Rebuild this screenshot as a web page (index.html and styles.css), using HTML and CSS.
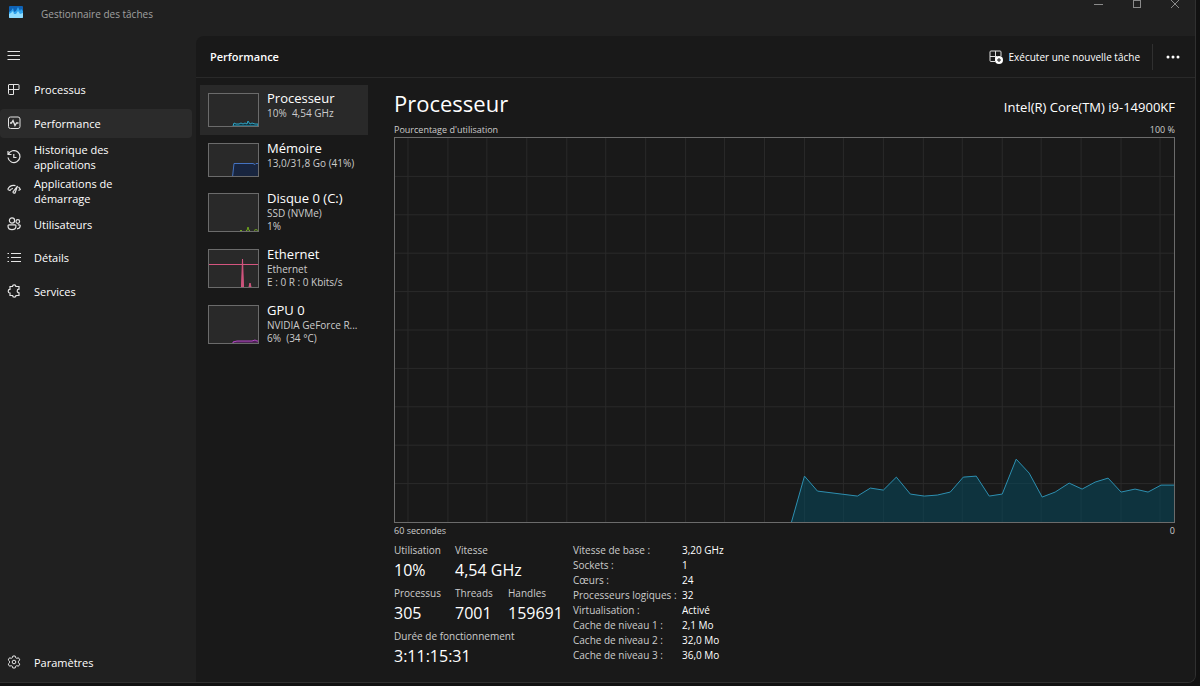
FILE: index.html
```html
<!DOCTYPE html>
<html lang="fr">
<head>
    <meta charset="UTF-8">
    <meta name="viewport" content="width=device-width, initial-scale=1.0">
    <title>Gestionnaire des tâches</title>
    <link rel="stylesheet" href="styles.css">
</head>
<body>
    <div class="window">
        <header class="titlebar">
            <svg class="app-logo" width="14" height="12" viewBox="0 0 14 12">
                <rect width="14" height="12" rx="1" fill="#0f62b5"/>
                <path d="M0 6 L2 5 L4 2 L5 6 L7 5 L9 1 L11 5 L12 3 L14 5 V11 Q14 12 13 12 H1 Q0 12 0 11 Z" fill="#2fa4ee"/>
                <path d="M0 8 L2 7 L4 5 L5 8 L7 8 L9 5 L11 8 L14 7 V11 Q14 12 13 12 H1 Q0 12 0 11 Z" fill="#8fdcff"/>
            </svg>
            <span class="app-name">Gestionnaire des tâches</span>
            <div class="window-buttons">
                <button type="button" aria-label="Réduire"><svg width="10" height="10" viewBox="0 0 10 10"><path d="M0 5.500H9"/></svg></button>
                <button type="button" aria-label="Agrandir"><svg width="10" height="10" viewBox="0 0 10 10"><rect x="1.500" y="1.500" width="7" height="7"/></svg></button>
                <button type="button" aria-label="Fermer"><svg width="10" height="10" viewBox="0 0 10 10"><path d="M1 1L9 9M9 1L1 9"/></svg></button>
            </div>
        </header>

        <div class="layout">
            <nav class="sidebar">
                <button type="button" class="menu-button" aria-label="Menu">
                    <svg class="icon" viewBox="0 0 14 14"><path d="M.5 2.500H13M.5 6.500H13M.5 10.500H13"/></svg>
                </button>
                <div class="nav-list">
                    <a href="#" class="nav-item">
                        <svg class="icon" viewBox="0 0 14 14"><path d="M2 1.500H11.500Q12 1.500 12 2V6.500H1.500V2Q1.500 1.500 2 1.500ZM6.500 1.500V11.500H2.500Q1.500 11.500 1.500 10.500V6"/></svg>
                        <span>Processus</span>
                    </a>
                    <a href="#" class="nav-item active">
                        <svg class="icon" viewBox="0 0 14 14"><rect x="1.500" y="1" width="11.500" height="11.500" rx="2"/><path d="M3 7H4.500L6 4.500L8 9.500L9.500 7H11.500" stroke-width="1.300"/></svg>
                        <span>Performance</span>
                    </a>
                    <a href="#" class="nav-item">
                        <svg class="icon" viewBox="0 0 14 14"><path d="M1 1V4.500H4.500M1.300 4.500A6 6 0 1 1 1 7.500M6.800 4V7.500H9.500" stroke-width="1.200"/></svg>
                        <span>Historique des applications</span>
                    </a>
                    <a href="#" class="nav-item">
                        <svg class="icon" viewBox="0 0 14 14"><path d="M.7 6.500A7 7 0 0 1 8.500 2.600M11.500 4A7 7 0 0 1 13.300 6.500L11.500 7.500M.7 6.500L3 7.500A4 4 0 0 1 6 5.500M10.500 3L6 9A1.300 1.300 0 0 0 8 10Z" stroke-width="1.200"/></svg>
                        <span>Applications de démarrage</span>
                    </a>
                    <a href="#" class="nav-item">
                        <svg class="icon" viewBox="0 0 14 14"><path d="M2 7.800H8Q9 7.800 9 8.800Q9 12.700 5 12.700Q1 12.700 1 8.800Q1 7.800 2 7.800ZM10.800 7.800H12.300Q13.300 7.800 13.300 8.800Q13 11.800 10 11.800" stroke-width="1.200"/><circle cx="5" cy="3.500" r="2.600" stroke-width="1.200"/><circle cx="10.800" cy="4.500" r="1.800" stroke-width="1.200"/></svg>
                        <span>Utilisateurs</span>
                    </a>
                    <a href="#" class="nav-item">
                        <svg class="icon" viewBox="0 0 14 14"><path d="M.5 2.500H2M.5 6.500H2M.5 10.500H2M4 2.500H14M4 6.500H14M4 10.500H14"/></svg>
                        <span>Détails</span>
                    </a>
                    <a href="#" class="nav-item">
                        <svg class="icon" viewBox="0 0 14 14"><path d="M3 2.500H5.500A1.700 1.700 0 0 1 8.900 2.500H12V5.200A1.800 1.800 0 0 0 12 8.800V11.500H9A1.700 1.700 0 0 1 5.600 11.500H3V9A1.800 1.800 0 0 1 3 5.400Z" stroke-width="1.200"/></svg>
                        <span>Services</span>
                    </a>
                </div>
                <a href="#" class="nav-item settings">
                    <svg class="icon" viewBox="0 0 14 14"><path d="M5.800 1H8.200L8.600 2.700L9.800 3.300L11.500 2.800L12.800 4.900L11.500 6.200V7.800L12.800 9.100L11.500 11.200L9.800 10.700L8.600 11.300L8.200 13H5.800L5.400 11.300L4.200 10.700L2.500 11.200L1.200 9.100L2.500 7.800V6.200L1.200 4.900L2.500 2.800L4.200 3.300L5.400 2.700Z"/><circle cx="7" cy="7" r="1.800"/></svg>
                    <span>Paramètres</span>
                </a>
            </nav>

            <main class="content">
                <div class="toolbar">
                    <h1>Performance</h1>
                    <button type="button" class="run-task">
                        <svg width="14" height="14" viewBox="0 0 14 14">
                            <path d="M6 11.500H2Q1 11.500 1 10.500V2Q1 1 2 1H11Q12 1 12 2V6M1 6.500H8M6.500 1V11" fill="none" stroke="#ddd"/>
                            <circle cx="10" cy="10" r="4" fill="#fff"/>
                            <path d="M8 10H12M10 8V12" stroke="#191919"/>
                        </svg>
                        Exécuter une nouvelle tâche
                    </button>
                    <button type="button" class="more" aria-label="Plus d'options">
                        <svg width="14" height="4" viewBox="0 0 14 4"><circle cx="2" cy="2" r="1.500"/><circle cx="7" cy="2" r="1.500"/><circle cx="12" cy="2" r="1.500"/></svg>
                    </button>
                </div>

                <div class="panels">
                    <div class="resources">
                        <a href="#" class="resource selected">
                            <svg class="thumb" viewBox="0 0 49 32">
                                <path d="M24 32L25 29L27 30L30 30L32 29L34 30L36 29L38 30L39 27L41 30L43 29L46 30L49 30V32Z" fill="#10323d" stroke="#2fa3c4"/>
                            </svg>
                            <span class="resource-text"><strong>Processeur</strong><small>10%&nbsp; 4,54 GHz</small></span>
                        </a>
                        <a href="#" class="resource">
                            <svg class="thumb" viewBox="0 0 49 32">
                                <path d="M23.500 33L25 19.500H44L46 20.500L47 19.500H50V33Z" fill="#18253f" stroke="#4472c0"/>
                            </svg>
                            <span class="resource-text"><strong>Mémoire</strong><small>13,0/31,8 Go (41%)</small></span>
                        </a>
                        <a href="#" class="resource">
                            <svg class="thumb tall" viewBox="0 0 49 37">
                                <path d="M31 36.500H33M37 36.500H38L39 33L40 36.500H41M45 36.500L47 35.500L49 36.500" fill="none" stroke="#6fa51e"/>
                            </svg>
                            <span class="resource-text"><strong>Disque 0 (C:)</strong><small>SSD (NVMe)</small><small>1%</small></span>
                        </a>
                        <a href="#" class="resource">
                            <svg class="thumb tall" viewBox="0 0 49 37">
                                <path d="M0 14.500H49" fill="none" stroke="#d4557f"/>
                                <path d="M32.500 37L33.500 9L34.500 37ZM40 37L41 33L42 37Z" fill="#c8527a" stroke="#d4557f"/>
                            </svg>
                            <span class="resource-text"><strong>Ethernet</strong><small>Ethernet</small><small>E : 0 R : 0 Kbits/s</small></span>
                        </a>
                        <a href="#" class="resource">
                            <svg class="thumb tall" viewBox="0 0 49 37">
                                <path d="M24 36L28 35H43L46 34L48 35H50V38H24Z" fill="#4b2452" stroke="#b346c4"/>
                            </svg>
                            <span class="resource-text"><strong>GPU 0</strong><small>NVIDIA GeForce R...</small><small>6%&nbsp; (34 °C)</small></span>
                        </a>
                    </div>

                    <section class="details">
                        <div class="details-header">
                            <h2>Processeur</h2>
                            <span class="model">Intel(R) Core(TM) i9-14900KF</span>
                        </div>
                        <div class="axis"><span>Pourcentage d'utilisation</span><span>100 %</span></div>
                        <svg class="chart" viewBox="0 0 780 385" preserveAspectRatio="none">
                            <path class="grid" d="M0 38.500H780M0 77H780M0 115.500H780M0 154H780M0 192.500H780M0 231H780M0 269.500H780M0 308H780M0 346.500H780"/>
                            <path class="grid" d="M13 0V385M53 0V385M92 0V385M132 0V385M172 0V385M211 0V385M251 0V385M291 0V385M330 0V385M370 0V385M410 0V385M449 0V385M489 0V385M529 0V385M568 0V385M608 0V385M647 0V385M687 0V385M727 0V385M766 0V385"/>
                            <path class="usage" d="M397 385L410 339L423 354L463 359L476 351L489 353L502 340L516 357L530 359L543 358L556 355L569 340L582 339L595 359L608 357L622 322L635 336L648 360L661 355L675 346L688 352L701 345L714 341L727 355L741 352L754 355L767 348H781V386H397Z"/>
                        </svg>
                        <div class="axis"><span>60 secondes</span><span>0</span></div>

                        <div class="stats">
                            <dl class="live">
                                <div><dt>Utilisation</dt><dd>10%</dd></div>
                                <div class="speed"><dt>Vitesse</dt><dd>4,54 GHz</dd></div>
                                <div><dt>Processus</dt><dd>305</dd></div>
                                <div><dt>Threads</dt><dd>7001</dd></div>
                                <div><dt>Handles</dt><dd>159691</dd></div>
                                <div class="uptime"><dt>Durée de fonctionnement</dt><dd>3:11:15:31</dd></div>
                            </dl>
                            <table class="specs">
                                <tr><th>Vitesse de base :</th><td>3,20 GHz</td></tr>
                                <tr><th>Sockets :</th><td>1</td></tr>
                                <tr><th>Cœurs :</th><td>24</td></tr>
                                <tr><th>Processeurs logiques :</th><td>32</td></tr>
                                <tr><th>Virtualisation :</th><td>Activé</td></tr>
                                <tr><th>Cache de niveau 1 :</th><td>2,1 Mo</td></tr>
                                <tr><th>Cache de niveau 2 :</th><td>32,0 Mo</td></tr>
                                <tr><th>Cache de niveau 3 :</th><td>36,0 Mo</td></tr>
                            </table>
                        </div>
                    </section>
                </div>
            </main>
        </div>
    </div>
</body>
</html>
```
FILE: styles.css
```css
* {
    box-sizing: border-box;
}
body {
    margin: 0;
    padding: 0 4px 3px 0;
    min-height: 100vh;
    display: flex;
    background-color: #111;
    color: #fff;
    font-family: "Open Sans", "Noto Sans", sans-serif;
    font-size: 11px;
}
button {
    padding: 0;
    border: 0;
    background: none;
    color: inherit;
    font: inherit;
}
a {
    color: inherit;
    text-decoration: none;
}
.window {
    flex: 1;
    display: flex;
    flex-direction: column;
    background-color: #202020;
    border: 1px solid #303030;
    border-width: 0 1px 1px 0;
    border-radius: 0 0 8px 0;
    overflow: hidden;
}

/* Barre de titre */
.titlebar {
    display: flex;
    align-items: flex-start;
    height: 36px;
    padding: 6px 15px 0 9px;
}
.app-name {
    margin-left: 18px;
    color: #a0a0a0;
    font-size: 10px;
    line-height: 16px;
}
.window-buttons {
    display: flex;
    gap: 28px;
    margin-left: auto;
    margin-top: -7px;
}
.window-buttons svg {
    display: block;
    fill: none;
    stroke: #8a8a8a;
}

/* Menu de gauche */
.layout {
    flex: 1;
    display: flex;
}
.sidebar {
    width: 196px;
    flex: none;
    display: flex;
    flex-direction: column;
    padding: 12px 4px 5px 0;
}
.icon {
    width: 14px;
    height: 14px;
    flex: none;
    fill: none;
    stroke: #e4e4e4;
}
.menu-button {
    height: 16px;
    width: 30px;
    padding-left: 7px;
    text-align: left;
}
.menu-button svg {
    display: block;
}
.nav-list {
    display: grid;
    grid-template-rows: repeat(7, 1fr);
    gap: 4px;
    height: 231px;
    margin-top: 11px;
}
.nav-item {
    display: flex;
    align-items: center;
    gap: 13px;
    min-height: 0;
    padding: 0 70px 0 7px;
    border-radius: 4px;
    line-height: 15px;
}
.nav-item.active {
    background-color: #2b2b2b;
}
.settings {
    height: 30px;
    margin-top: auto;
}

/* Contenu */
.content {
    flex: 1;
    min-width: 0;
    display: flex;
    flex-direction: column;
    background-color: #191919;
    border-top-left-radius: 8px;
}
.toolbar {
    display: flex;
    align-items: center;
    height: 42px;
    padding: 0 15px 0 14px;
    border-bottom: 1px solid #292929;
}
.toolbar h1 {
    margin: 0;
    font-size: 11px;
    font-weight: 600;
}
.run-task {
    display: flex;
    align-items: center;
    gap: 6px;
    margin-left: auto;
    font-size: 10px;
}
.more {
    height: 26px;
    margin-left: 12px;
    padding-left: 13px;
    border-left: 1px solid #303030;
}
.more svg {
    display: block;
    fill: #fff;
}
.panels {
    flex: 1;
    display: flex;
    padding: 7px 20px 10px 4px;
}
.resources {
    width: 168px;
    flex: none;
    margin-right: 26px;
}
.resource {
    display: flex;
    gap: 8px;
    padding: 8px;
}
.resource.selected {
    background-color: #292929;
}
.thumb {
    width: 51px;
    height: 34px;
    flex: none;
    background-color: #292929;
    border: 1px solid #6b6b6b;
}
.thumb.tall {
    height: 39px;
    margin-bottom: 1px;
}
.resource-text {
    display: flex;
    flex-direction: column;
    height: 34px;
    margin-top: -3px;
    white-space: nowrap;
}
.resource-text strong {
    font-size: 13px;
    font-weight: 400;
    line-height: 17px;
}
.resource-text small {
    color: #ccc;
    font-size: 10px;
    line-height: 13px;
}

/* Graphique et statistiques */
.details {
    flex: 1;
    display: flex;
    flex-direction: column;
}
.details-header {
    display: flex;
    justify-content: space-between;
    align-items: baseline;
}
.details-header h2 {
    margin: 0;
    font-size: 22px;
    font-weight: 400;
    line-height: 37px;
}
.model {
    font-size: 13px;
}
.axis {
    display: flex;
    justify-content: space-between;
    color: #ccc;
    font-size: 9px;
    line-height: 15px;
}
.chart {
    flex: 1 1 200px;
    width: 100%;
    min-height: 200px;
    border: 1px solid #6b6b6b;
}
.chart path {
    fill: none;
    vector-effect: non-scaling-stroke;
}
.chart .grid {
    stroke: #2a2a2a;
}
.chart .usage {
    fill: rgba(6, 72, 92, 0.55);
    stroke: #2d8fb0;
}
.stats {
    display: flex;
    gap: 10px;
    margin-top: 5px;
}
.live {
    display: grid;
    grid-template-columns: 61px 53px 55px;
    grid-auto-rows: 43px;
    margin: 0;
    white-space: nowrap;
}
.live .speed {
    grid-column: span 2;
}
.live .uptime {
    grid-column: span 3;
}
.live dt {
    color: #ccc;
    font-size: 10px;
    line-height: 15px;
}
.live dd {
    margin: 0;
    font-size: 16px;
    line-height: 24px;
}
.specs {
    align-self: flex-start;
    border-collapse: collapse;
    font-size: 10px;
    line-height: 15px;
}
.specs th {
    width: 109px;
    padding: 0;
    color: #ccc;
    font-weight: 400;
    text-align: left;
    white-space: nowrap;
}
.specs td {
    padding: 0;
}
```
